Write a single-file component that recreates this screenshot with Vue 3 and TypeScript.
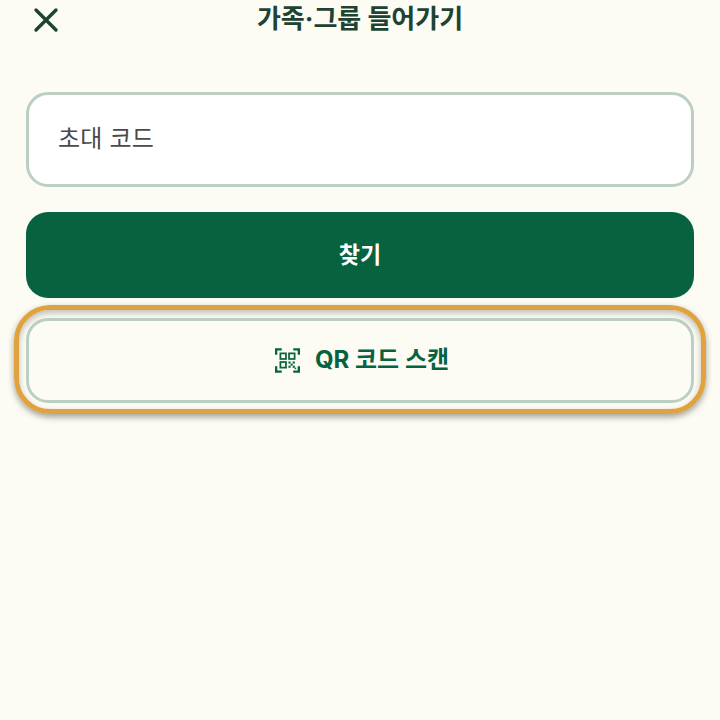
<script setup lang="ts">
const title = "가족·그룹 들어가기";
</script>

<template>
  <div class="page">
    <header class="head">
      <button class="close" aria-label="닫기">
        <svg width="26" height="26" viewBox="0 0 26 26"><path d="M3 3 23 23M23 3 3 23" stroke="#1d4332" stroke-width="3.4" stroke-linecap="round" fill="none"/></svg>
      </button>
      <h1 class="title">{{ title }}</h1>
    </header>
    <main class="form">
      <div class="field"><span class="lift field-label">초대 코드</span></div>
      <button class="primary"><span class="lift">찾기</span></button>
      <div class="ring">
        <button class="secondary">
          <svg class="qr" width="25" height="25" viewBox="0 0 26 26" fill="none">
            <g stroke="#06623f" stroke-width="2.4">
              <path d="M1.2 7V1.5H7M19 1.5H24.8V7M24.8 19V24.5H19M7 24.5H1.2V19"/>
            </g>
            <g stroke="#06623f" stroke-width="1.8">
              <rect x="5.6" y="5.6" width="5.8" height="5.8"/>
              <rect x="14.6" y="5.6" width="5.8" height="5.8"/>
              <rect x="5.6" y="14.6" width="5.8" height="5.8"/>
            </g>
            <g fill="#06623f">
              <rect x="14" y="14" width="2.2" height="2.2"/><rect x="18.4" y="14" width="2.2" height="2.2"/>
              <rect x="16.2" y="16.2" width="2.2" height="2.2"/>
              <rect x="14" y="18.4" width="2.2" height="2.2"/><rect x="18.4" y="18.4" width="2.2" height="2.2"/>
              <rect x="20.4" y="20.4" width="1.6" height="1.6"/>
            </g>
          </svg>
          <span class="lift qr-label">QR 코드 스캔</span>
        </button>
      </div>
    </main>
  </div>
</template>

<style>
html, body { margin: 0; background: #fcfbf4; }
</style>

<style scoped>
.page {
  width: 720px;
  height: 720px;
  overflow: hidden;
  background: #fcfbf4;
  font-family: Inter, "Noto Sans CJK KR", "Noto Sans", sans-serif;
}
.head {
  display: flex;
  align-items: center;
  justify-content: center;
  position: relative;
  height: 40px;
}
.close {
  position: absolute;
  left: 33px;
  top: 7px;
  width: 26px;
  height: 26px;
  padding: 0;
  border: 0;
  background: none;
  display: block;
}
.close svg { display: block; }
.title {
  margin: 0 0 2px;
  font-size: 26px;
  font-weight: 700;
  color: #1d4332;
  line-height: 38px;
}
.lift {
  display: block;
  margin-bottom: 5px;
}
.field-label {
  margin-bottom: 6px;
  letter-spacing: 0.2px;
}
.qr-label {
  margin-bottom: 6px;
}
.form {
  display: flex;
  flex-direction: column;
  padding: 52px 26px 0;
}
.field {
  box-sizing: border-box;
  height: 95px;
  border: 3px solid #bccfc3;
  border-radius: 22px;
  background: #fff;
  padding: 0 29px;
  display: flex;
  align-items: center;
  font-size: 24px;
  color: #4a4a4a;
}
.primary {
  margin-top: 25px;
  height: 86px;
  border: 0;
  border-radius: 22px;
  background: #06623f;
  color: #fff;
  font: inherit;
  font-size: 23px;
  font-weight: 700;
}
.ring {
  margin: 7px -12px 0;
  padding: 8px 7px 6px;
  border: 5px solid #dfa23f;
  border-radius: 36px;
  box-shadow: 0 3px 6px rgba(40, 50, 40, 0.45), inset 0 3px 6px rgba(40, 50, 40, 0.3);
  display: flex;
}
.secondary {
  flex: 1;
  height: 85px;
  box-sizing: border-box;
  border: 3px solid #bccfc3;
  border-radius: 22px;
  padding: 0 0 0 4px;
  background: #fcfbf4;
  color: #06623f;
  font: inherit;
  font-size: 24px;
  font-weight: 700;
  display: flex;
  align-items: center;
  justify-content: center;
  gap: 15px;
}
</style>
